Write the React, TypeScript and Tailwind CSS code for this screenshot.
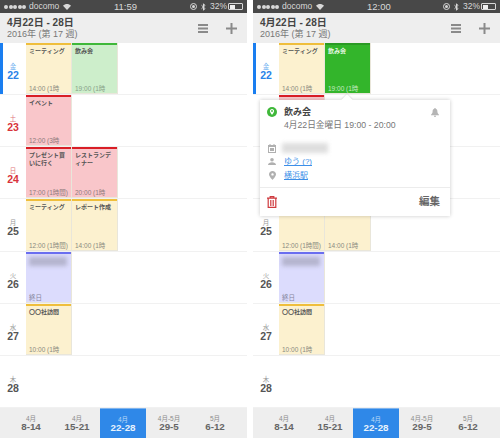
import React from "react";

type Ev = { title?: string; time: string; color: "y" | "g" | "G" | "r" | "b"; blur?: boolean };

const colors = {
  y: { bg: "bg-[#fcf1cf]", bar: "bg-[#efbe3c]", title: "text-[#555]", time: "text-[#8a8a80]" },
  g: { bg: "bg-[#cdeecb]", bar: "bg-[#3fb83a]", title: "text-[#555]", time: "text-[#87a087]" },
  G: { bg: "bg-[#33b52b]", bar: "bg-[#2a9a24]", title: "text-[#e6f7e4]", time: "text-[#c4eac1]" },
  r: { bg: "bg-[#f9c6ca]", bar: "bg-[#d91e26]", title: "text-[#555]", time: "text-[#8e7a7c]" },
  b: { bg: "bg-[#dcdcfd]", bar: "bg-[#6a6ef0]", title: "text-[#555]", time: "text-[#85859c]" },
};

function Tile({ ev }: { ev: Ev }) {
  const c = colors[ev.color];
  return (
    <div className={`w-[46px] h-full flex flex-col border-r border-b border-[#e9e6da] ${c.bg}`}>
      <div className={`h-[2px] shrink-0 ${c.bar}`} />
      <div className="flex-1 flex flex-col justify-between pl-[3px] pr-[1px] pt-[2px] overflow-hidden">
        {ev.blur ? (
          <div className="h-[9px] w-[38px] mt-[1px] bg-[#b4b4ce] blur-[2px]" />
        ) : (
          <div className={`text-[6px] leading-[8px] font-semibold ${c.title}`}>{ev.title}</div>
        )}
        <div className={`text-[6.5px] leading-[9px] whitespace-nowrap ${c.time}`}>{ev.time}</div>
      </div>
    </div>
  );
}

function Row({ wd, day, tone, today, events }: { wd: string; day: string; tone: "b" | "r" | "k"; today?: boolean; events: Ev[] }) {
  const text = tone === "b" ? "text-[#2a84e8]" : tone === "r" ? "text-[#d8333b]" : "text-[#555]";
  const sub = tone === "b" ? "text-[#6fb0f0]" : tone === "r" ? "text-[#e0757a]" : "text-[#999]";
  return (
    <div className="h-[52.4px] flex border-b border-[#f1f1f1] relative">
      <div className={`w-[3px] shrink-0 ${today ? "bg-[#1a7ef0]" : ""}`} />
      <div className="w-[20px] shrink-0 flex flex-col items-center justify-center pt-[6px]">
        <div className={`text-[6.5px] leading-[7px] ${sub}`}>{wd}</div>
        <div className={`text-[10.5px] leading-[10px] font-bold ${text}`}>{day}</div>
      </div>
      <div className="w-[3px] shrink-0" />
      <div className="flex">
        {events.map((e, i) => (
          <Tile key={i} ev={e} />
        ))}
      </div>
    </div>
  );
}

function StatusBar({ time }: { time: string }) {
  return (
    <div className="h-[13px] bg-[#484848] text-[#d8d8d8] flex items-center pl-[4px] pr-[3px] relative text-[8.5px] leading-[13px]">
      <div className="flex gap-[0.5px]">
        {[0, 1, 2, 3, 4].map((i) => (
          <span key={i} className="w-[4px] h-[4px] rounded-full bg-[#d8d8d8]" />
        ))}
      </div>
      <span className="ml-[3px]">docomo</span>
      <svg width="8" height="6" viewBox="0 0 16 12" className="ml-[4px]" fill="#d8d8d8">
        <path d="M8 12 0 3.500C4.500-1 11.500-1 16 3.500Z" />
      </svg>
      <span className="absolute left-[114px] text-[9.5px]">{time}</span>
      <div className="ml-auto flex items-center">
        <span className="w-[7px] h-[7px] rounded-full border border-[#d8d8d8] flex items-center justify-center">
          <span className="w-[3px] h-[3px] rounded-full bg-[#d8d8d8]" />
        </span>
        <svg width="5" height="8" viewBox="0 0 10 16" className="ml-[4px]" fill="none" stroke="#d8d8d8" strokeWidth="2">
          <path d="M1 4.500 8 11 5 14.500V1.500L8 5 1 11.500" />
        </svg>
        <span className="ml-[4px]">32%</span>
        <div className="ml-[1px] w-[15px] h-[7px] border border-[#d8d8d8] rounded-[1px] flex items-stretch p-[0.5px] mr-[1px]">
          <div className="w-[5px] bg-[#f0f0f0]" />
        </div>
      </div>
    </div>
  );
}

function Header() {
  return (
    <div className="h-[30px] bg-[#eeeeee] flex items-center pl-[7px] pr-[10px]">
      <div className="flex flex-col">
        <div className="text-[10px] leading-[12px] font-semibold text-[#444]">4月22日 - 28日</div>
        <div className="text-[9px] leading-[11px] text-[#777]">2016年 (第 17 週)</div>
      </div>
      <div className="ml-auto flex items-center gap-[18px]">
        <svg width="10" height="9" viewBox="0 0 10 9" fill="#8a8a8a">
          <rect y="0" width="10" height="2" />
          <rect y="3.500" width="10" height="2" />
          <rect y="7" width="10" height="2" />
        </svg>
        <svg width="11" height="11" viewBox="0 0 11 11" fill="#8a8a8a">
          <rect x="4.500" width="2" height="11" />
          <rect y="4.500" width="11" height="2" />
        </svg>
      </div>
    </div>
  );
}

function TabBar() {
  const tabs = [
    ["4月", "8-14"],
    ["4月", "15-21"],
    ["4月", "22-28"],
    ["4月-5月", "29-5"],
    ["5月", "6-12"],
  ];
  return (
    <div className="h-[30px] bg-[#eeeeee] flex pl-[8px]">
      {tabs.map(([m, d], i) => (
        <div
          key={i}
          className={`w-[46px] flex flex-col items-center pt-[7px] ${i === 2 ? "bg-[#2f88e8] border-t border-[#7fb4ee]" : ""}`}
        >
          <div className={`text-[6.5px] leading-[7px] ${i === 2 ? "text-[#bcd9f7]" : "text-[#8a8a8a]"}`}>{m}</div>
          <div className={`text-[9.8px] leading-[10px] font-bold ${i === 2 ? "text-[#e8f2fd]" : "text-[#666]"}`}>{d}</div>
        </div>
      ))}
    </div>
  );
}

function Popover() {
  return (
    <div className="absolute left-[7px] top-[99.500px] w-[190px] h-[116px] bg-white shadow-[0_0_4px_rgba(0,0,0,0.22)] flex flex-col">
      <div className="absolute left-[83px] -top-[4px] w-[8px] h-[8px] rotate-45 bg-white shadow-[-1px_-1px_1px_rgba(0,0,0,0.08)]" />
      <div className="relative flex-1 pl-[7px] pr-[10px] pt-[6px] flex flex-col">
        <div className="flex items-center h-[13px]">
          <svg width="10" height="10" viewBox="0 0 10 10" className="shrink-0">
            <circle cx="5" cy="5" r="5" fill="#3fb83a" />
            <path d="M5 2C3.700 2 2.900 3 2.900 4C2.900 5.400 5 7.800 5 7.800S7.100 5.400 7.100 4C7.100 3 6.300 2 5 2Z" fill="#fff" />
            <circle cx="5" cy="4" r="0.900" fill="#3fb83a" />
          </svg>
          <span className="ml-[7px] text-[9px] leading-[13px] font-bold text-[#444]">飲み会</span>
          <svg width="8" height="9" viewBox="0 0 8 9" className="ml-auto mr-[1px]" fill="#b5b5b5">
            <path d="M4 0C4.500 0 4.800 .4 4.800 .8C6 1.200 6.400 2.300 6.400 3.500C6.400 5 7 5.800 8 6.800V7.200H0V6.800C1 5.800 1.600 5 1.600 3.500C1.600 2.300 2 1.200 3.200 .8C3.200 .4 3.500 0 4 0ZM3 7.700H5C5 8.500 4.500 9 4 9S3 8.500 3 7.700Z" />
          </svg>
        </div>
        <div className="ml-[17px] text-[8.7px] leading-[13px] text-[#777]">4月22日金曜日 19:00 - 20:00</div>
        <div className="mt-[10px] flex items-center h-[13.500px]">
          <svg width="8" height="9" viewBox="0 0 8 9" className="ml-[1px] shrink-0" fill="#b0b0b0">
            <path d="M0 1H1.500V0H2.500V1H5.500V0H6.500V1H8V9H0ZM1 3V8H7V3Z" />
            <rect x="2" y="4" width="4" height="3" />
          </svg>
          <div className="ml-[6px] h-[10px] w-[46px] bg-[#dedede] blur-[2px]" />
        </div>
        <div className="flex items-center h-[13.500px]">
          <svg width="8" height="7" viewBox="0 0 8 7" className="ml-[1px] shrink-0" fill="#b0b0b0">
            <circle cx="4" cy="1.800" r="1.800" />
            <path d="M0 7C0 5 2 4.200 4 4.200S8 5 8 7Z" />
          </svg>
          <span className="ml-[8px] text-[8px] leading-[13px] text-[#3c8fe8] underline">ゆう (?)</span>
        </div>
        <div className="flex items-center h-[13.500px]">
          <svg width="7" height="9" viewBox="0 0 7 9" className="ml-[1.500px] shrink-0" fill="#b0b0b0">
            <path fillRule="evenodd" d="M3.500 0C5.500 0 7 1.400 7 3.300C7 5.500 3.500 9 3.500 9S0 5.500 0 3.300C0 1.400 1.500 0 3.500 0ZM3.500 2.200A1.200 1.200 0 1 0 3.500 4.600A1.200 1.200 0 1 0 3.500 2.200Z" />
          </svg>
          <span className="ml-[8.500px] text-[8px] leading-[13px] text-[#3c8fe8] underline">横浜駅</span>
        </div>
      </div>
      <div className="relative h-[29px] border-t border-[#ececec] flex items-center pl-[7px] pr-[10px]">
        <svg width="10" height="12" viewBox="0 0 10 12" fill="none" stroke="#cf3b3f" strokeWidth="1.200">
          <path d="M0 2.200H10M3.200 2V.7H6.800V2M1.200 2.200V11.400H8.800V2.200M3.800 4V10M6.200 4V10" />
        </svg>
        <span className="ml-auto text-[10.5px] leading-[13px] font-bold text-[#666]">編集</span>
      </div>
    </div>
  );
}

function Phone({ time, selected }: { time: string; selected?: boolean }) {
  return (
    <div className="w-[247px] h-[438px] flex flex-col relative overflow-hidden bg-white">
      <StatusBar time={time} />
      <Header />
      <div className="flex-1 flex flex-col overflow-hidden">
        <Row
          wd="金"
          day="22"
          tone="b"
          today
          events={[
            { title: "ミーティング", time: "14:00 (1時", color: "y" },
            { title: "飲み会", time: "19:00 (1時", color: selected ? "G" : "g" },
          ]}
        />
        <Row wd="土" day="23" tone="r" events={[{ title: "イベント", time: "12:00 (3時", color: "r" }]} />
        <Row
          wd="日"
          day="24"
          tone="r"
          events={[
            { title: "プレゼント買いに行く", time: "17:00 (1時間)", color: "r" },
            { title: "レストランディナー", time: "20:00 (1時", color: "r" },
          ]}
        />
        <Row
          wd="月"
          day="25"
          tone="k"
          events={[
            { title: "ミーティング", time: "12:00 (1時間)", color: "y" },
            { title: "レポート作成", time: "14:00 (1時", color: "y" },
          ]}
        />
        <Row wd="火" day="26" tone="k" events={[{ blur: true, time: "終日", color: "b" }]} />
        <Row wd="水" day="27" tone="k" events={[{ title: "〇〇社訪問", time: "10:00 (1時", color: "y" }]} />
        <Row wd="木" day="28" tone="k" events={[]} />
      </div>
      <TabBar />
      {selected && <Popover />}
    </div>
  );
}

export default function App() {
  return (
    <div className="w-[500px] h-[438px] bg-white flex gap-[6px] overflow-hidden font-['Liberation_Sans','Noto_Sans_CJK_JP',sans-serif]">
      <Phone time="11:59" />
      <Phone time="12:00" selected />
    </div>
  );
}
